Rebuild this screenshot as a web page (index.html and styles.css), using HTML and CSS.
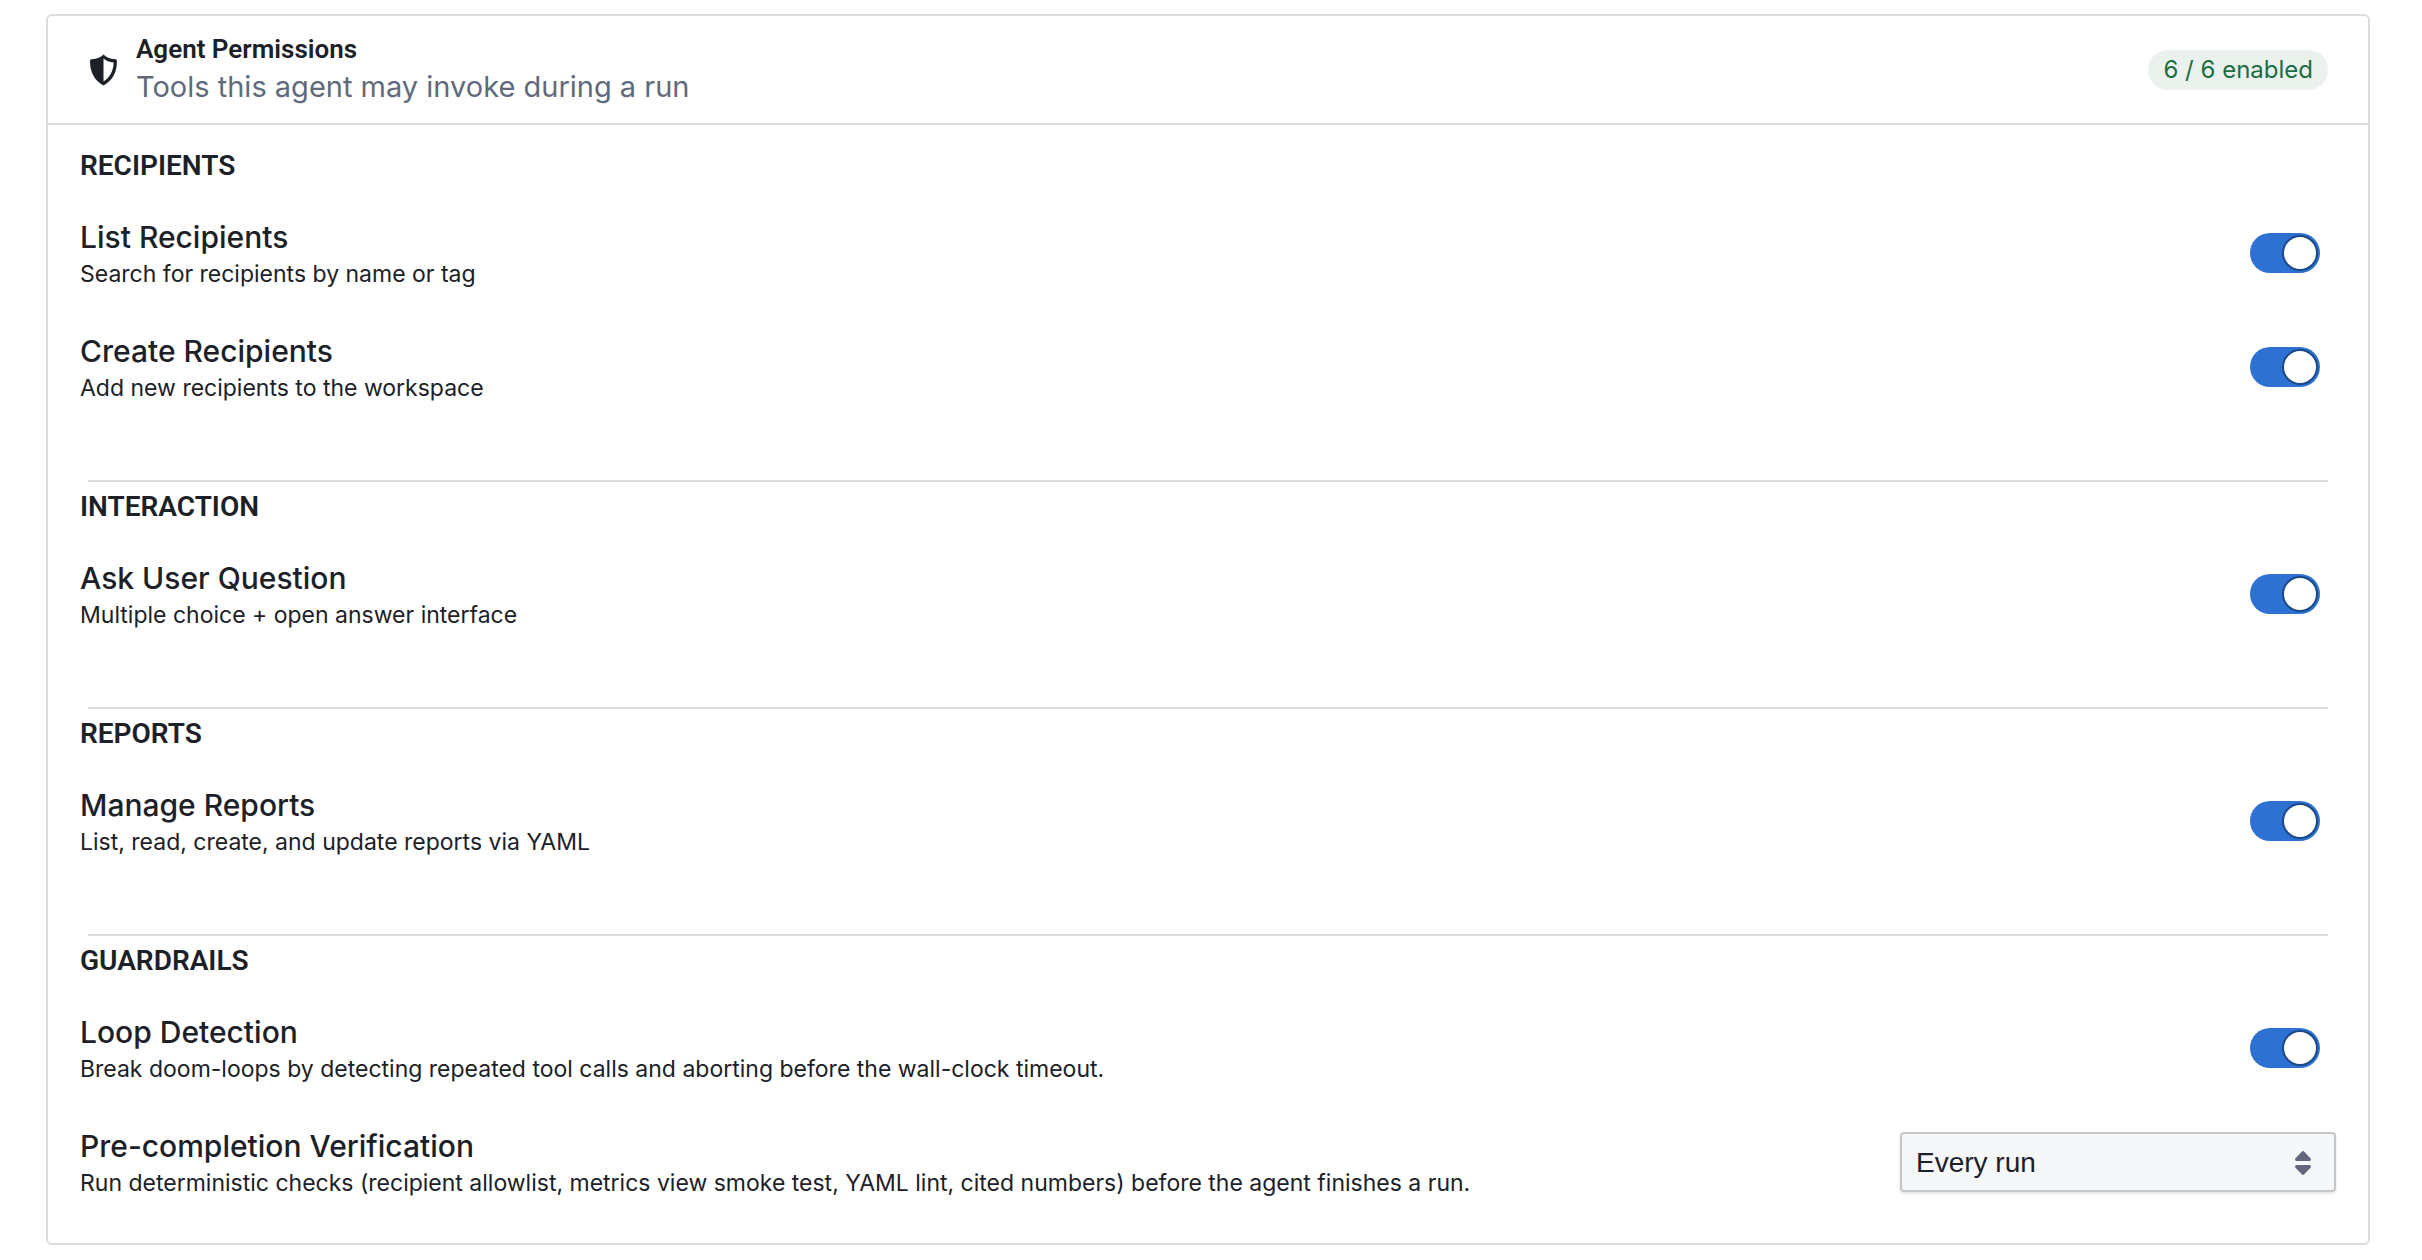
FILE: index.html
```html
<!DOCTYPE html>
<html lang="en">
    <head>
        <meta charset="UTF-8" />
        <meta name="viewport" content="width=device-width, initial-scale=1.0" />
        <title>Agent Permissions</title>
        <link rel="stylesheet" href="styles.css">
    </head>
    <body>
        <main class="card">
            <header class="card-header">
                <svg class="shield" viewBox="0 0 27 32" aria-hidden="true">
                    <path fill="currentColor" fill-rule="evenodd" d="M13.5 0.5C15.8 3.2 19.8 5 25.6 5.3C26.4 5.4 26.9 5.9 26.9 6.7C27.3 17.5 22.7 26.6 13.5 31.5C4.3 26.6 -0.3 17.5 0.1 6.7C0.1 5.9 0.6 5.4 1.4 5.3C7.2 5 11.2 3.2 13.5 0.5ZM13.5 4.6V27.6C20.2 23.3 23.4 16.9 23.6 8.6C19.4 8.1 16 6.8 13.5 4.6Z" />
                </svg>
                <div class="card-titles">
                    <h1 class="card-title">Agent Permissions</h1>
                    <p class="card-subtitle">Tools this agent may invoke during a run</p>
                </div>
                <span class="badge">6 / 6 enabled</span>
            </header>

            <div class="card-body">
                <section class="group">
                    <h2 class="group-title">RECIPIENTS</h2>
                    <div class="row">
                        <div class="row-text">
                            <label class="row-title" for="list-recipients">List Recipients</label>
                            <p class="row-desc">Search for recipients by name or tag</p>
                        </div>
                        <input class="switch" type="checkbox" id="list-recipients" checked>
                    </div>
                    <div class="row">
                        <div class="row-text">
                            <label class="row-title" for="create-recipients">Create Recipients</label>
                            <p class="row-desc">Add new recipients to the workspace</p>
                        </div>
                        <input class="switch" type="checkbox" id="create-recipients" checked>
                    </div>
                </section>

                <hr class="divider">

                <section class="group">
                    <h2 class="group-title">INTERACTION</h2>
                    <div class="row">
                        <div class="row-text">
                            <label class="row-title" for="ask-question">Ask User Question</label>
                            <p class="row-desc">Multiple choice + open answer interface</p>
                        </div>
                        <input class="switch" type="checkbox" id="ask-question" checked>
                    </div>
                </section>

                <hr class="divider">

                <section class="group">
                    <h2 class="group-title">REPORTS</h2>
                    <div class="row">
                        <div class="row-text">
                            <label class="row-title" for="manage-reports">Manage Reports</label>
                            <p class="row-desc">List, read, create, and update reports via YAML</p>
                        </div>
                        <input class="switch" type="checkbox" id="manage-reports" checked>
                    </div>
                </section>

                <hr class="divider">

                <section class="group">
                    <h2 class="group-title">GUARDRAILS</h2>
                    <div class="row">
                        <div class="row-text">
                            <label class="row-title" for="loop-detection">Loop Detection</label>
                            <p class="row-desc">Break doom-loops by detecting repeated tool calls and aborting before the wall-clock timeout.</p>
                        </div>
                        <input class="switch" type="checkbox" id="loop-detection" checked>
                    </div>
                    <div class="row">
                        <div class="row-text">
                            <label class="row-title" for="verification">Pre-completion Verification</label>
                            <p class="row-desc">Run deterministic checks (recipient allowlist, metrics view smoke test, YAML lint, cited numbers) before the agent finishes a run.</p>
                        </div>
                        <div class="select">
                            <select class="select-input" id="verification">
                                <option>Every run</option>
                            </select>
                            <svg class="select-icon" viewBox="0 0 16 24" aria-hidden="true">
                                <path fill="currentColor" d="M7 0.5Q8 -0.4 9 0.5L15.5 7.3Q16.2 8.2 15.8 9.2Q15.4 10 14.4 10H1.6Q0.6 10 0.2 9.2Q-0.2 8.2 0.5 7.3ZM7 23.5Q8 24.4 9 23.5L15.5 16.7Q16.2 15.8 15.8 14.8Q15.4 14 14.4 14H1.6Q0.6 14 0.2 14.8Q-0.2 15.8 0.5 16.7Z" />
                            </svg>
                        </div>
                    </div>
                </section>
            </div>
        </main>
    </body>
</html>
```
FILE: styles.css
```css
*,
*::before {
    box-sizing: border-box;
}
body {
    margin: 0;
    background-color: #fff;
    color: #1c2127;
    font-family: Inter, sans-serif;
}
h1,
h2,
p {
    margin: 0;
}
.card {
    margin: 14px 52px 15px 46px;
    border: 2px solid #dcdcdd;
    border-radius: 6px;
}
.card-header {
    display: flex;
    align-items: center;
    padding: 0 40px 0 42px;
    border-bottom: 2px solid #dcdcdd;
}
.shield {
    width: 27px;
    height: 32px;
    margin-right: 19px;
}
.card-titles {
    flex: 1;
    padding: 14px 0 17px;
}
.card-title,
.group-title {
    font-family: Roboto, sans-serif;
    font-size: 28px;
    font-weight: 600;
    line-height: 38px;
}
.card-title {
    font-size: 26px;
}
.card-subtitle {
    color: #5f6b7c;
    font-size: 29px;
    line-height: 38px;
}
.badge {
    padding: 0 15px;
    border-radius: 20px;
    background-color: #ebf2ee;
    color: #1c6e42;
    font-size: 24px;
    line-height: 40px;
}
.card-body {
    padding: 22px 32px 44px;
}
.group-title {
    margin-bottom: 31px;
}
.row {
    display: flex;
    align-items: center;
    justify-content: space-between;
    height: 74px;
}
.row + .row {
    margin-top: 40px;
}
.row-text {
    padding-top: 3px;
}
.row-title {
    display: block;
    font-size: 30px;
    font-weight: 500;
    line-height: 38px;
}
.row-desc {
    font-size: 23px;
    line-height: 36px;
}
.switch {
    appearance: none;
    width: 70px;
    height: 40px;
    margin: 0 16px 0 0;
    padding: 2px;
    border-radius: 20px;
    background-color: #2d72d2;
    cursor: pointer;
}
.switch::before {
    content: "";
    display: block;
    width: 36px;
    height: 36px;
    border: 2px solid #1c4a87;
    border-radius: 50%;
    background-color: #fff;
}
.switch:checked::before {
    margin-left: auto;
}
.divider {
    height: 2px;
    margin: 76px 8px 6px;
    border: 0;
    background-color: #dcdcdd;
}
.select {
    position: relative;
    width: 436px;
}
.select-input {
    appearance: none;
    width: 100%;
    height: 60px;
    padding: 0 48px 0 14px;
    border: 2px solid #c5c6c8;
    border-radius: 4px;
    background-color: #f5f7f9;
    box-shadow: 0 2px 3px rgba(17, 20, 24, 0.1);
    color: #1c2127;
    font-family: "Liberation Sans", sans-serif;
    font-size: 28px;
}
.select-icon {
    position: absolute;
    top: 19px;
    right: 25px;
    width: 16px;
    height: 24px;
    color: #636780;
    pointer-events: none;
}
```
